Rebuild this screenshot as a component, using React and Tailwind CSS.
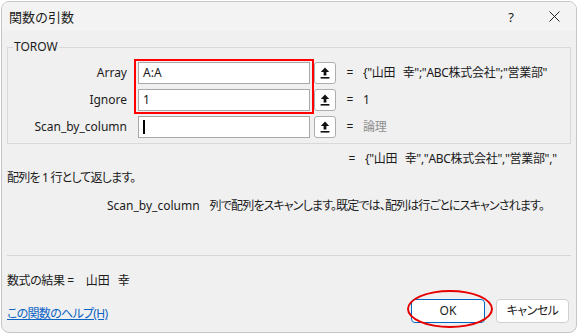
import React from 'react';

function UploadIcon() {
    return (
        <svg width="10" height="12" viewBox="0 0 10 12" fill="#111">
            <path d="M5 0.5 L9.2 5 H6.4 V8.6 H3.6 V5 H0.8 Z"/>
            <rect x="0.6" y="10" width="8.8" height="1.6"/>
        </svg>
    );
}

function RefButton() {
    return (
        <div className="flex h-[22px] w-[22px] shrink-0 items-center justify-center rounded-[3px] border border-[#adadad] bg-white">
            <UploadIcon/>
        </div>
    );
}

function ArgRow({ label, value, result, muted, cursor }) {
    return (
        <div className="flex h-[22px] items-center">
            <div className="w-[120px] shrink-0 pr-[1px] text-right">{label}</div>
            <div className="ml-[10px] flex h-[22px] w-[172px] shrink-0 items-center border border-[#a8a8a8] bg-white pl-[4px]">
                {cursor ? <span className="block h-[14px] w-[2px] bg-black"/> : value}
            </div>
            <div className="ml-[4px]"><RefButton/></div>
            <div className="ml-[10px] w-[8px] text-center">=</div>
            <div className={'ml-[9px] w-[200px] overflow-hidden whitespace-nowrap tracking-[-0.3px] ' + (muted ? 'text-[#8e8e8e]' : '')}>{result}</div>
        </div>
    );
}

export default function App() {
    const name = '山田\u2002\u2009幸';

    return (
        <div className="h-[334px] w-[578px] whitespace-nowrap bg-white pl-[1px] pt-[1px] text-[12px] leading-[16px] text-[#1b1b1b] [font-family:'Noto_Sans','Noto_Sans_CJK_JP',sans-serif] [font-feature-settings:'palt']">
            <div className="flex h-[332px] w-[576px] flex-col overflow-hidden rounded-[8px] border border-[#c6c6c6] bg-[#f0f0f0]">
                <div className="flex h-[29px] shrink-0 items-center bg-[#f3f3f3] pl-[7px] text-[13px]">
                    <span className="[font-feature-settings:normal]">関数の引数</span>
                    <span className="ml-auto mr-[35px] text-[13px]">?</span>
                    <svg width="11" height="11" viewBox="0 0 11 11" className="mr-[16px]" stroke="#222" strokeWidth="1">
                        <path d="M0.5 0.5 L10.5 10.5 M10.5 0.5 L0.5 10.5"/>
                    </svg>
                </div>

                <div className="flex flex-1 flex-col px-[5px]">
                    <fieldset className="mt-[8px] border border-[#d9d9d9] px-0 pb-[5px]">
                        <legend className="ml-[5px] px-[1px]">TOROW</legend>
                        <div className="relative mt-[7px] flex flex-col gap-[5px]">
                            <ArgRow label="Array" value="A:A" result={'{"' + name + '";"ABC株式会社";"営業部"'}/>
                            <ArgRow label="Ignore" value="1" result="1"/>
                            <ArgRow label="Scan_by_column" cursor result="論理" muted/>
                            <div className="absolute left-[126px] top-[-3px] h-[55px] w-[180px] border-2 border-[#ff0000]"/>
                        </div>
                    </fieldset>

                    <div className="mt-[7px] flex">
                        <span className="ml-[341px] w-[8px] text-center">=</span>
                        <span className="ml-[9px] w-[200px] overflow-hidden tracking-[-0.3px]">{'{"' + name + '","ABC株式会社","営業部","'}</span>
                    </div>
                    <div className="mt-[3px] tracking-[-0.8px]">配列を 1 行として返します。</div>
                    <div className="mt-[12px] flex pl-[100px]">
                        <span>Scan_by_column</span>
                        <span className="ml-[10px] tracking-[-0.85px]">列で配列をスキャンします。既定では、配列は行ごとにスキャンされます。</span>
                    </div>

                    <div className="mt-[41px] h-px bg-[#d6d6d6]"/>

                    <div className="mt-[17px] flex">
                        <span className="tracking-[-0.4px]">数式の結果 =</span>
                        <span className="ml-[12px]">{name}</span>
                    </div>

                    <div className="mt-[10px] flex items-center">
                        <a className="mt-[6px] tracking-[-0.7px] text-[#0b63c5] underline">この関数のヘルプ(H)</a>
                        <div className="relative ml-auto">
                            <button className="flex h-[24px] w-[74px] items-center justify-center rounded-[4px] border border-[#0067c0] bg-white">OK</button>
                            <div className="absolute left-[-4px] top-[-9px] h-[38px] w-[86px] rounded-[50%] border-2 border-[#e60000]"/>
                        </div>
                        <button className="ml-[11px] mr-[2px] flex h-[24px] w-[73px] items-center justify-center rounded-[4px] border border-[#d0d0d0] bg-white tracking-[-0.5px]">キャンセル</button>
                    </div>
                </div>
            </div>
        </div>
    );
}
